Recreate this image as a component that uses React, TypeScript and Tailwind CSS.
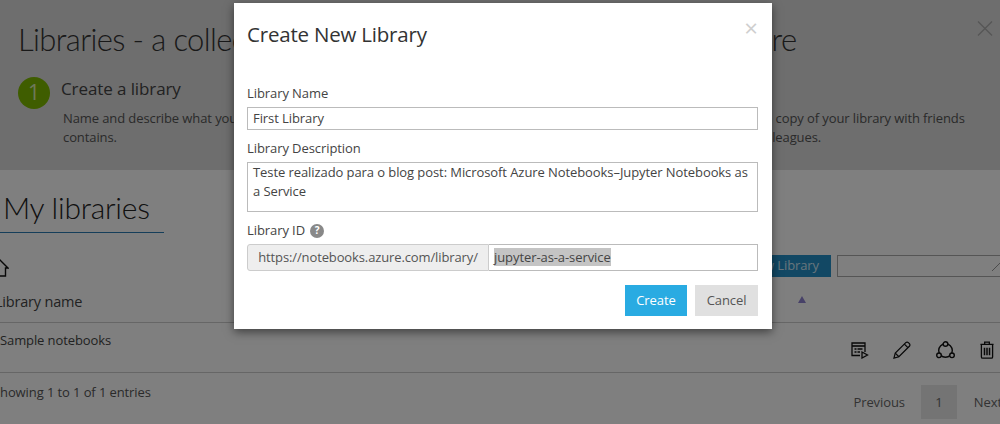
const font = { fontFamily: '"Open Sans", "Noto Sans", sans-serif' };

function HomeIcon() {
  return (
    <svg width="20" height="19" viewBox="0 0 20 19" fill="none" stroke="#111" strokeWidth="1.4">
      <path d="M1 10L10 1l9 9h-2.500v8h-13v-8z" />
    </svg>
  );
}

function NotebookIcon() {
  return (
    <svg width="18" height="17" viewBox="0 0 18 17" fill="none" stroke="#111" strokeWidth="1.3">
      <path d="M14 10V1H1v12.500h8" />
      <path d="M1 4h13" strokeWidth="1.600" />
      <path d="M3.500 7h2M6.500 7h5M3.500 10h2M6.500 10h2.500" />
      <path d="M11 10v6l5.500-3z" />
    </svg>
  );
}

function PencilIcon() {
  return (
    <svg width="18" height="18" viewBox="0 0 19 19" fill="none" stroke="#111" strokeWidth="1.3">
      <path d="M1 18l1.400-5.200L13.500 1.700a1.900 1.900 0 0 1 2.700 0l1.100 1.100a1.900 1.900 0 0 1 0 2.700L6.200 16.600z" />
      <path d="M2.400 12.800l3.800 3.800M12 3.300l3.700 3.700" />
    </svg>
  );
}

function ShareIcon() {
  return (
    <svg width="19" height="18" viewBox="0 0 19 18" fill="none" stroke="#111" strokeWidth="1.400">
      <circle cx="9.500" cy="9.500" r="6.800" />
      <circle cx="9.500" cy="3" r="2.300" fill="#fff" />
      <circle cx="3" cy="14.300" r="2.300" fill="#fff" />
      <circle cx="16" cy="14.300" r="2.300" fill="#fff" />
    </svg>
  );
}

function TrashIcon() {
  return (
    <svg width="14" height="18" viewBox="0 0 15 19" fill="none" stroke="#111" strokeWidth="1.400">
      <path d="M.5 3.500h14M5 3.500V1h5v2.500" />
      <path d="M1.500 3.500V17a1.300 1.300 0 0 0 1.300 1.300h9.400A1.300 1.300 0 0 0 13.500 17V3.500" />
      <path d="M4.800 7v8M7.500 7v8M10.200 7v8" strokeWidth="1.600" />
    </svg>
  );
}

function Background() {
  return (
    <div className="flex h-full flex-col bg-white text-[#555]">
      <div className="h-[170px] shrink-0 bg-[#dcdcdc] pl-[18px] pt-[17px] tracking-[-0.1px]">
        <div className="flex items-start justify-between">
          <h1
            className="whitespace-nowrap text-[31px] leading-[45px] font-light tracking-[-0.63px] text-[#333]"
            style={{ fontFamily: "Lato, sans-serif" }}
          >
            Libraries - a collection of notebooks to use, share and explore
          </h1>
          <svg className="mr-[7px] mt-[4px]" width="16" height="15" viewBox="0 0 16 15" stroke="#aaa" strokeWidth="1.2">
            <path d="M1 .5l14 14M15 .5L1 14.500" />
          </svg>
        </div>
        <div className="mt-[15px] flex">
          <div className="flex h-[32px] w-[32px] shrink-0 items-center justify-center rounded-full bg-[#7fba00] text-[21px] text-[#dff0b5]">
            1
          </div>
          <div className="ml-[11px]">
            <div className="-mt-[1px] text-[17px] leading-[26px] text-[#444]">Create a library</div>
            <p className="mt-[7px] ml-[2px] text-[13px] leading-[19px]">
              Name and describe what your library
              <br />
              contains.
            </p>
          </div>
          <p className="absolute left-[666px] top-[109px] whitespace-nowrap text-[13px] leading-[19px]">
            Share and clone a copy of your library with friends
            <br />
            <span className="ml-[63px]">and colleagues.</span>
          </p>
        </div>
      </div>
      <div className="relative flex-1 pt-[15px] tracking-[-0.1px] text-[#444]">
        <div
          className="w-[164px] border-b border-[#2b7cb5] pb-[3px] pl-[3px] text-[30px] leading-[44px] font-light tracking-[-0.25px] text-[#222]"
          style={{ fontFamily: "Lato, sans-serif" }}
        >
          My libraries
        </div>
        <div className="mt-[25px] -ml-[11px]">
          <HomeIcon />
        </div>
        <div className="mt-[2px] flex h-[44px] items-start border-b border-[#ccc] pt-[12px]">
          <span className="-ml-[5px] text-[14.500px] leading-[22px] tracking-[-0.2px]">Library name</span>
          <span className="ml-auto mr-[194px] mt-[5px] h-0 w-0 border-x-[4px] border-b-[7px] border-x-transparent border-b-[#8f82d0]" />
        </div>
        <div className="flex h-[50px] items-start border-b border-[#ccc]">
          <span className="pt-[7px] text-[13px] leading-[20px]">Sample notebooks</span>
          <div className="ml-auto mr-[6px] mt-[18px] flex items-center">
            <NotebookIcon />
            <span className="ml-[24px]"><PencilIcon /></span>
            <span className="ml-[25px]"><ShareIcon /></span>
            <span className="ml-[25px]"><TrashIcon /></span>
          </div>
        </div>
        <div className="flex items-start">
          <span className="-ml-[7px] pt-[9px] text-[13px] leading-[20px] text-[#555]">Showing 1 to 1 of 1 entries</span>
          <div className="ml-auto -mr-[2px] mt-[12px] flex items-center text-[13px] text-[#666]">
            <span className="pt-[2px]">Previous</span>
            <span className="ml-[16px] flex h-[34px] w-[36px] items-center justify-center bg-[#e8e8e8] pt-[2px]">1</span>
            <span className="ml-[17px] pt-[2px]">Next</span>
          </div>
        </div>
        <div className="absolute right-[-6px] top-[85px] flex items-center gap-[6px]">
          <span className="flex h-[22px] w-[80px] items-center justify-end bg-[#2590c8] pr-[12px] text-[13px] whitespace-nowrap text-[#cfeaf8]">
            New Library
          </span>
          <span className="relative h-[22px] w-[169px] border border-[#aaa] bg-white">
            <svg className="absolute right-[3px] top-[7px]" width="10" height="8" viewBox="0 0 10 8" stroke="#999">
              <path d="M0 8L8 0" />
            </svg>
          </span>
        </div>
      </div>
    </div>
  );
}

export default function App() {
  return (
    <div className="relative h-[424px] w-[1000px] overflow-hidden" style={font}>
      <Background />
      <div className="absolute inset-0 bg-black/50" />
      <div className="absolute left-[234px] top-[3px] flex h-[326px] w-[538px] flex-col bg-white pl-[13px] pr-[14px] tracking-[-0.08px] text-[#444] shadow-[0_3px_9px_rgba(0,0,0,0.5)]">
        <div className="flex items-start justify-between pt-[17px]">
          <h2 className="text-[20.500px] leading-[28px] tracking-[-0.2px] text-[#333]">Create New Library</h2>
          <span className="text-[24px] leading-[15px] text-[#cfcfcf]">×</span>
        </div>
        <label className="mt-[36px] text-[13px] leading-[19px]">Library Name</label>
        <div className="mt-[4px] h-[23px] border border-[#bbb] px-[5px] text-[13px] leading-[21px]">First Library</div>
        <label className="mt-[9px] text-[13px] leading-[19px]">Library Description</label>
        <div className="mt-[4px] h-[50px] border border-[#bbb] px-[5px] text-[13px] leading-[19px]">
          Teste realizado para o blog post: Microsoft Azure Notebooks–Jupyter Notebooks as a Service
        </div>
        <label className="mt-[9px] flex items-center text-[13px] leading-[19px]">
          Library ID
          <span className="ml-[5px] flex h-[14px] w-[14px] items-center justify-center rounded-full bg-[#888] text-[10px] font-bold text-white">?</span>
        </label>
        <div className="mt-[4px] flex h-[27px] text-[13px] leading-[25px]">
          <div className="flex w-[242px] items-center justify-center rounded-l-[3px] border border-[#ccc] bg-[#eee] tracking-[-0.12px] text-[#555]">
            https://notebooks.azure.com/library/
          </div>
          <div className="flex-1 border border-l-0 border-[#bbb] pl-[5px]">
            <span className="bg-[#c4c4c4]">jupyter-as-a-service</span>
          </div>
        </div>
        <div className="mt-[14px] flex justify-end gap-[8px] text-[13px]">
          <button className="h-[31px] w-[62px] bg-[#29abe2] text-white">Create</button>
          <button className="h-[31px] w-[63px] bg-[#e0e0e0] text-[#555]">Cancel</button>
        </div>
      </div>
    </div>
  );
}
